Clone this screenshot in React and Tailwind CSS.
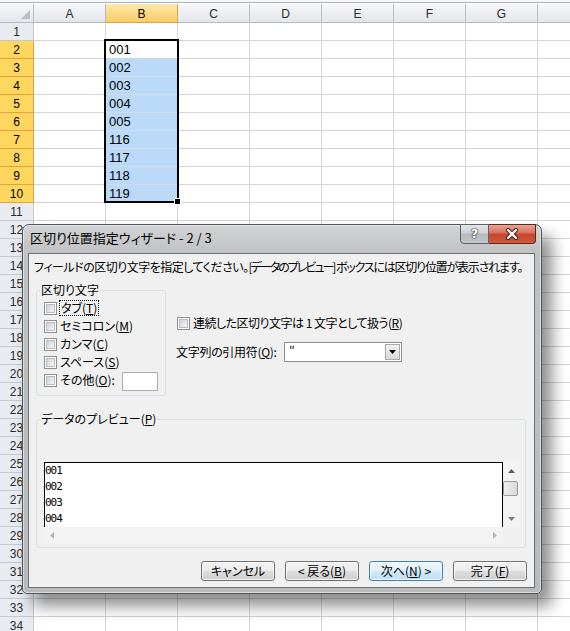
import React from 'react';

const COLS = ['A', 'B', 'C', 'D', 'E', 'F', 'G', 'H'];
const BVALS = { 2: '001', 3: '002', 4: '003', 5: '004', 6: '005', 7: '116', 8: '117', 9: '118', 10: '119' };
const ROWS = Array.from({ length: 34 }, (_, i) => i + 1);

function SheetRow({ n }) {
  const sel = n >= 2 && n <= 10;
  return (
    <div className="flex h-[18px] shrink-0">
      <div
        className={
          sel
            ? 'flex w-[34px] shrink-0 items-center justify-center border-r border-b border-[#e2a23f] bg-[#ffd65e] text-[12px] text-black'
            : 'flex w-[34px] shrink-0 items-center justify-center border-r border-b border-[#c3c9d1] bg-[#e8ebef] text-[12px] text-[#2b2b2b]'
        }
      >
        {n}
      </div>
      {COLS.map((c) => {
        const hl = c === 'B' && n >= 3 && n <= 10;
        return (
          <div
            key={c}
            className={
              hl
                ? 'w-[72px] shrink-0 border-r border-b border-[#d2dde9] bg-[#bbd9f8] pl-[3px] pt-[1px] text-[13px] leading-[16px] text-black'
                : 'w-[72px] shrink-0 border-r border-b border-[#d4d4d4] pl-[3px] pt-[1px] text-[13px] leading-[16px] text-black'
            }
          >
            {c === 'B' && sel ? BVALS[n] : ''}
          </div>
        );
      })}
    </div>
  );
}

function Check() {
  return (
    <span className="flex h-[13px] w-[13px] shrink-0 items-center justify-center border border-[#8e8f8f] bg-white">
      <span className="h-[9px] w-[9px] border border-[#b9bdc3] bg-[linear-gradient(135deg,#cdd1d6,#f6f6f6)]" />
    </span>
  );
}

function U({ children }) {
  return <span className="underline underline-offset-[1px]">{children}</span>;
}

function CheckRow({ children }) {
  return (
    <div className="flex h-[18px] items-center">
      <Check />
      <span className="ml-[3px]">{children}</span>
    </div>
  );
}

function WinButton({ children, primary }) {
  return (
    <div
      className={
        primary
          ? 'flex h-[20px] w-[74px] items-center justify-center rounded-[3px] border border-[#3c7fb1] bg-[linear-gradient(#eef7fd_0%,#e0f1fb_50%,#cfe9f8_50%,#bfe0f4_100%)] shadow-[inset_0_0_0_1px_rgba(255,255,255,0.75)] text-black'
          : 'flex h-[20px] w-[74px] items-center justify-center rounded-[3px] border border-[#707070] bg-[linear-gradient(#f2f2f2_0%,#ebebeb_50%,#dddddd_50%,#cfcfcf_100%)] shadow-[inset_0_0_0_1px_rgba(255,255,255,0.7)] text-black'
      }
    >
      {children}
    </div>
  );
}

function Dialog() {
  return (
    <div className="absolute left-[22px] top-[224px] flex h-[370px] w-[520px] flex-col rounded-t-[7px] rounded-b-[5px] border border-[#50555b] bg-[linear-gradient(180deg,#d2d3d4_0px,#c0c1c2_28px,#b9babb_100%)] shadow-[10px_12px_16px_rgba(0,0,0,0.45),inset_0_0_0_1px_rgba(255,255,255,0.45)] font-['Noto_Sans_CJK_JP',sans-serif] text-black [font-feature-settings:'palt']">
      <div className="flex h-[28px] shrink-0 items-start">
        <div className="pl-[7px] pt-[5px] text-[13px] leading-[16px]">区切り位置指定ウィザード - 2 / 3</div>
        <div className="ml-auto mr-[5px] -mt-[1px] flex">
          <div className="flex h-[20px] w-[29px] items-center justify-center rounded-bl-[4px] border border-[#5d6168] bg-[linear-gradient(#e4e5e7_0%,#cfd1d4_45%,#b4b7bb_50%,#c3c6ca_100%)]">
            <span className="font-['DejaVu_Sans',sans-serif] text-[13px] font-bold leading-[14px] text-white [text-shadow:0_0_1px_#333,0_0_1px_#333,0_0_2px_#444]">?</span>
          </div>
          <div className="flex h-[20px] w-[47px] items-center justify-center rounded-br-[4px] border border-l-0 border-[#5a2a22] bg-[linear-gradient(#e8a493_0%,#d8705a_45%,#c7442a_50%,#d4583a_100%)]">
            <svg width="14" height="12" viewBox="0 0 14 12">
              <path d="M3 2 L11 10 M11 2 L3 10" stroke="#3a1b16" strokeWidth="4.2" strokeLinecap="round" fill="none" />
              <path d="M3 2 L11 10 M11 2 L3 10" stroke="#ffffff" strokeWidth="2.4" strokeLinecap="round" fill="none" />
            </svg>
          </div>
        </div>
      </div>
      <div className="ml-[5px] flex h-[335px] w-[507px] shrink-0 flex-col border border-[#6d7075] bg-[#f0f0f0] pl-[7px] text-[12px] leading-[16px]">
        <div className="-ml-[2px] mt-[5px] whitespace-nowrap">
          <span className="tracking-[-0.5px]">フィールドの区切り文字を指定してください。</span>
          <span className="tracking-[-2px]">[データのプレビュー]</span>
          <span className="tracking-[-1.2px]"> ボックスには区切り位置が表示されます。</span>
        </div>
        <div className="mt-[15px] flex">
          <div className="flex h-[106px] w-[130px] flex-col rounded-[3px] border border-[#d5dfe5]">
            <span className="-mt-[9px] ml-[3px] self-start bg-[#f0f0f0] px-[1px]">区切り文字</span>
            <div className="mt-[1px] flex flex-col pl-[7px]">
              <div className="flex h-[18px] items-center">
                <Check />
                <span className="ml-[2px] border border-dotted border-black px-[1px] leading-[14px]">
                  タブ(<U>T</U>)
                </span>
              </div>
              <CheckRow>
                セミコロン(<U>M</U>)
              </CheckRow>
              <CheckRow>
                カンマ(<U>C</U>)
              </CheckRow>
              <CheckRow>
                スペース(<U>S</U>)
              </CheckRow>
              <div className="flex h-[18px] items-center">
                <Check />
                <span className="ml-[3px]">
                  その他(<U>O</U>):
                </span>
                <span className="ml-[7px] mt-[3px] h-[19px] w-[36px] border border-[#abadb3] bg-white" />
              </div>
            </div>
          </div>
          <div className="ml-[11px] flex flex-col">
            <div className="mt-[25px] flex h-[16px] items-center">
              <Check />
              <span className="ml-[3px] whitespace-nowrap tracking-[-0.5px]">
                連続した区切り文字は 1 文字として扱う(<U>R</U>)
              </span>
            </div>
            <div className="-ml-[1px] mt-[11px] flex h-[20px] items-center">
              <span className="w-[108px] whitespace-nowrap tracking-[-0.3px]">
                文字列の引用符(<U>Q</U>):
              </span>
              <div className="flex h-[20px] w-[118px] border border-[#8e8f8f] bg-white">
                <span className="flex-1 pl-[4px] leading-[14px]">″</span>
                <span className="m-[1px] flex w-[15px] items-center justify-center border border-[#a9a9a9] bg-[linear-gradient(#f2f2f2,#d9d9d9)]">
                  <svg width="7" height="4" viewBox="0 0 7 4">
                    <polygon points="0,0 7,0 3.5,4" fill="#000" />
                  </svg>
                </span>
              </div>
            </div>
          </div>
        </div>
        <div className="mt-[23px] flex h-[129px] w-[490px] flex-col rounded-[3px] border border-[#d5dfe5]">
          <span className="-mt-[9px] ml-[3px] self-start bg-[#f0f0f0] px-[1px]">
            データのプレビュー(<U>P</U>)
          </span>
          <div className="ml-[7px] mt-[35px] flex w-[476px] flex-col">
            <div className="flex h-[65px]">
              <div className="w-[459px] overflow-hidden border-x border-t border-black bg-white font-['DejaVu_Sans_Mono',monospace] text-[11px] leading-[16px] tracking-[-1px] [font-feature-settings:normal]">
                <div>001</div>
                <div>002</div>
                <div>003</div>
                <div>004</div>
              </div>
              <div className="flex w-[17px] flex-col bg-[#f3f3f3]">
                <div className="flex h-[17px] items-center justify-center">
                  <svg width="7" height="4" viewBox="0 0 7 4">
                    <polygon points="0,4 7,4 3.5,0" fill="#5a5a5a" />
                  </svg>
                </div>
                <div className="mt-[2px] h-[15px] w-[15px] rounded-[2px] border border-[#9a9a9a] bg-[linear-gradient(90deg,#f1f1f1,#e3e3e3_50%,#d8d8d8)]" />
                <div className="flex-1" />
                <div className="flex h-[17px] items-center justify-center">
                  <svg width="7" height="4" viewBox="0 0 7 4">
                    <polygon points="0,0 7,0 3.5,4" fill="#7a7a7a" />
                  </svg>
                </div>
              </div>
            </div>
            <div className="flex h-[17px]">
              <div className="flex w-[459px] items-center justify-between bg-[#f3f3f3] px-[6px]">
                <svg width="4" height="7" viewBox="0 0 4 7">
                  <polygon points="4,0 4,7 0,3.5" fill="#b5b5b5" />
                </svg>
                <svg width="4" height="7" viewBox="0 0 4 7">
                  <polygon points="0,0 0,7 4,3.5" fill="#b5b5b5" />
                </svg>
              </div>
              <div className="w-[17px] bg-[#f0f0f0]" />
            </div>
          </div>
        </div>
        <div className="mt-[13px] flex justify-end gap-[10px] pr-[7px]">
          <WinButton>キャンセル</WinButton>
          <WinButton>
            &lt; 戻る(<U>B</U>)
          </WinButton>
          <WinButton primary>
            次へ(<U>N</U>) &gt;
          </WinButton>
          <WinButton>
            完了(<U>F</U>)
          </WinButton>
        </div>
      </div>
    </div>
  );
}

export default function App() {
  return (
    <div className="relative h-[631px] w-[570px] overflow-hidden bg-white font-['Liberation_Sans',sans-serif]">
      <div className="h-[2px] bg-[#f5f7fa]" />
      <div className="h-[1px] bg-[#aab4c0]" />
      <div className="h-[1px] bg-white" />
      <div className="flex h-[19px] shrink-0">
        <div className="flex w-[34px] shrink-0 items-end justify-end border-r border-b border-[#b4bcc6] bg-[linear-gradient(#f6f7f9,#e3e6eb)] pb-[3px] pr-[3px]">
          <svg width="9" height="9" viewBox="0 0 9 9">
            <polygon points="9,0 9,9 0,9" fill="#b9bec5" />
          </svg>
        </div>
        {COLS.map((c) =>
          c === 'B' ? (
            <div
              key={c}
              className="flex w-[72px] shrink-0 items-center justify-center border-r border-b border-[#e2a23f] bg-[linear-gradient(#fde9ad,#f8cd63)] pt-[2px] text-[12px] text-black"
            >
              {c}
            </div>
          ) : (
            <div
              key={c}
              className="flex w-[72px] shrink-0 items-center justify-center border-r border-b border-[#b4bcc6] bg-[linear-gradient(#f6f7f9,#e3e6eb)] pt-[2px] text-[12px] text-[#2b2b2b]"
            >
              {c === 'H' ? '' : c}
            </div>
          )
        )}
      </div>
      {ROWS.map((n) => (
        <SheetRow key={n} n={n} />
      ))}
      <div className="absolute left-[104px] top-[39px] h-[164px] w-[75px] border-2 border-black" />
      <div className="absolute left-[174px] top-[198px] h-[7px] w-[7px] border border-white bg-black" />
      <Dialog />
    </div>
  );
}
